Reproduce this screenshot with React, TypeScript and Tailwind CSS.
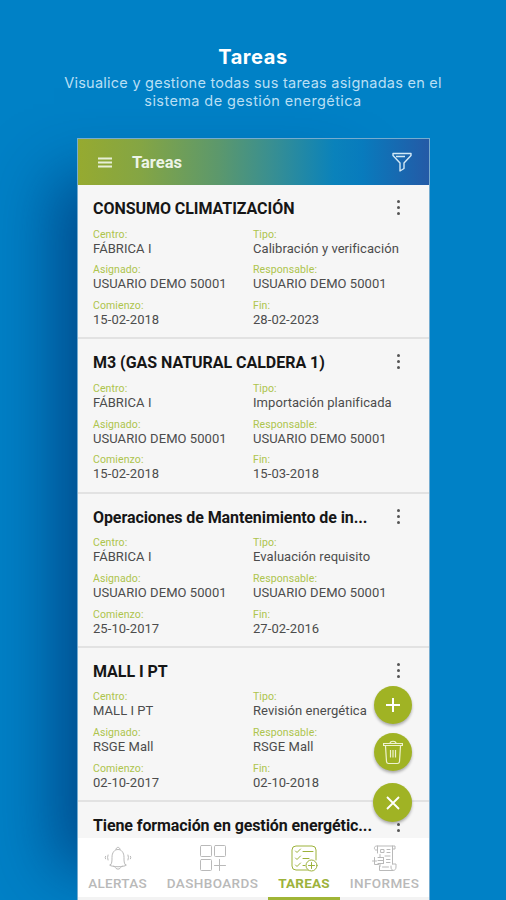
import React from 'react';
import clsx from 'clsx';

type Task = {
  title: string;
  titleClass: string;
  center?: string;
  type?: string;
  assigned?: string;
  responsible?: string;
  start?: string;
  end?: string;
};

const tasks: Task[] = [
  {
    title: 'CONSUMO CLIMATIZACIÓN',
    titleClass: 'tracking-[-0.05px]',
    center: 'FÁBRICA I',
    type: 'Calibración y verificación',
    assigned: 'USUARIO DEMO 50001',
    responsible: 'USUARIO DEMO 50001',
    start: '15-02-2018',
    end: '28-02-2023'
  },
  {
    title: 'M3 (GAS NATURAL CALDERA 1)',
    titleClass: 'tracking-[-0.03px]',
    center: 'FÁBRICA I',
    type: 'Importación planificada',
    assigned: 'USUARIO DEMO 50001',
    responsible: 'USUARIO DEMO 50001',
    start: '15-02-2018',
    end: '15-03-2018'
  },
  {
    title: 'Operaciones de Mantenimiento de in...',
    titleClass: 'tracking-[-0.08px]',
    center: 'FÁBRICA I',
    type: 'Evaluación requisito',
    assigned: 'USUARIO DEMO 50001',
    responsible: 'USUARIO DEMO 50001',
    start: '25-10-2017',
    end: '27-02-2016'
  },
  {
    title: 'MALL I PT',
    titleClass: 'tracking-[-0.05px]',
    center: 'MALL I PT',
    type: 'Revisión energética',
    assigned: 'RSGE Mall',
    responsible: 'RSGE Mall',
    start: '02-10-2017',
    end: '02-10-2018'
  }
];

function Field({ label, value }: { label: string; value?: string }) {
  return (
    <div className="h-[35.8px] whitespace-nowrap">
      <div className="h-[13px] text-[10.5px] leading-[13px] tracking-[0.1px] text-[#adc44c]">
        {label}:
      </div>
      <div className="text-[13px] leading-[16px] tracking-[0.06px] text-[#4c4c4c]">
        {value}
      </div>
    </div>
  );
}

function MoreDots() {
  return (
    <div className="flex w-1 flex-col items-center gap-[3px] pt-[1px]">
      <span className="h-[3px] w-[3px] rounded-full bg-[#555]" />
      <span className="h-[3px] w-[3px] rounded-full bg-[#555]" />
      <span className="h-[3px] w-[3px] rounded-full bg-[#555]" />
    </div>
  );
}

function TaskCard({ task }: { task: Task }) {
  return (
    <article className="h-[154.3px] shrink-0 border-b-2 border-[#e2e2e2] pl-[15px] pr-[29px] pt-[14px]">
      <div className="flex h-[28.6px] justify-between">
        <h2
          className={clsx(
            'whitespace-nowrap text-[16px] font-bold leading-5 text-[#161616]',
            task.titleClass
          )}
        >
          {task.title}
        </h2>
        <MoreDots />
      </div>
      <div className="grid grid-cols-[160px_1fr]">
        <Field label="Centro" value={task.center} />
        <Field label="Tipo" value={task.type} />
        <Field label="Asignado" value={task.assigned} />
        <Field label="Responsable" value={task.responsible} />
        <Field label="Comienzo" value={task.start} />
        <Field label="Fin" value={task.end} />
      </div>
    </article>
  );
}

const iconProps = {
  width: 28,
  height: 28,
  viewBox: '0 0 28 28',
  fill: 'none',
  stroke: 'currentColor',
  strokeWidth: 1,
  strokeLinecap: 'round',
  strokeLinejoin: 'round'
} as const;

function BellIcon() {
  return (
    <svg {...iconProps}>
      <path d="M12 5.500c0-3 4-3 4 0M6.500 21c1.500-1.500 1.500-4 1.500-7.500C8 8.500 10.500 5.500 14 5.500s6 3 6 8c0 3.500 0 6 1.500 7.500" />
      <path d="M9.500 22.300c-3.500-.2-5-1.800-3-1.800M9.500 22.300c3 .6 6 .6 9 0M18.500 22.300c3.500-.2 5-1.800 3-1.800M11 22.800c.5 3.200 5.500 3.200 6 0" />
      <path d="M4 11q-1 2.500 0 5M1.500 12.300q-.7 1.200 0 2.500M24 11q1 2.500 0 5M26.500 12.300q.7 1.200 0 2.500" />
    </svg>
  );
}

function DashboardIcon() {
  return (
    <svg {...iconProps}>
      <rect x="1.500" y="1.500" width="11" height="11" rx="1" />
      <rect x="15.500" y="1.500" width="11" height="11" rx="1" />
      <rect x="1.500" y="15.500" width="11" height="11" rx="1" />
      <path d="M20.500 15.500v11M15.500 21.500h11" />
    </svg>
  );
}

function TasksIcon() {
  return (
    <svg {...iconProps}>
      <path d="M19 26H6a4 4 0 0 1-4-4V6a4 4 0 0 1 4-4h16a4 4 0 0 1 4 4v10" />
      <path d="M5.500 7l1.500 1.500L10.500 5M5.500 14l1.500 1.500 3.500-3.500M5.500 21l1.500 1.500 3.500-3.500M13 7.500h10M13 14.500h6M13 21.500h2" />
      <circle cx="21.500" cy="21.500" r="5.500" fill="white" />
      <path d="M21.500 18.500v6M18.500 21.500h6" />
    </svg>
  );
}

function ReportsIcon() {
  return (
    <svg {...iconProps}>
      <path d="M6.500 9V6h-2c-2-1.500-1-4 1-4H24v3h-2M6.500 2v4M21.500 2v18M21.500 20H25v3c0 4.500-5 4.500-5 0v-1M22 26.500H8.500V22" />
      <path d="M10 5.500h3v3h-3zM16 5.500h3M16 8.500h3M14 12h5M15.500 15.500H19M15.500 18.500H19M11.500 23h6" />
      <path d="M9 10.500v3M7 13.500h5.500M7 16.500h5.500M7 19.500h5.500M3.500 13.500v7h4M9 20v2.500M1.500 17h4M12.500 13.500v6" />
    </svg>
  );
}

const navItems = [
  {
    label: 'ALERTAS',
    icon: <BellIcon />,
    width: 'w-[79px]',
    textClass: 'tracking-[0.3px]'
  },
  {
    label: 'DASHBOARDS',
    icon: <DashboardIcon />,
    width: 'w-[111px]',
    textClass: 'tracking-[0.4px]'
  },
  {
    label: 'TAREAS',
    icon: <TasksIcon />,
    width: 'w-[72px]',
    textClass: 'tracking-[0.2px]',
    active: true
  },
  {
    label: 'INFORMES',
    icon: <ReportsIcon />,
    width: 'w-[89px]',
    textClass: 'tracking-[0.4px]'
  }
];

function FloatingActions() {
  return (
    <div className="absolute left-[295px] top-[547px] flex w-[39px] flex-col items-center text-white">
      <button
        aria-label="Add"
        className="flex h-[38px] w-[38px] items-center justify-center rounded-full bg-[#a0b324] shadow-[0_2px_3px_rgba(0,0,0,0.3)]"
      >
        <svg width="14" height="14" viewBox="0 0 14 14" stroke="currentColor" strokeWidth="2">
          <path d="M7 0v14M0 7h14" />
        </svg>
      </button>
      <button
        aria-label="Delete"
        className="mt-[9px] flex h-[38px] w-[38px] items-center justify-center rounded-full bg-[#a0b324] shadow-[0_2px_3px_rgba(0,0,0,0.3)]"
      >
        <svg width="20" height="25" viewBox="0 0 20 25" fill="none" stroke="#eef2d0" strokeWidth="1.200">
          <path d="M2.500 6l1 15.500q.2 2 2 2h9q1.800 0 2-2L17.500 6M.6 5.500V3.500h18.800v2zM7 3.500c0-3 6-3 6 0M7.500 10v7.500M10 10v7.500M12.500 10v7.500" />
        </svg>
      </button>
      <button
        aria-label="Close"
        className="mt-[12px] flex h-[39px] w-[39px] items-center justify-center rounded-full bg-[#a0b324] shadow-[0_2px_3px_rgba(0,0,0,0.3)]"
      >
        <svg width="14" height="14" viewBox="0 0 14 14" stroke="currentColor" strokeWidth="1.800">
          <path d="M1 1l12 12M13 1L1 13" />
        </svg>
      </button>
    </div>
  );
}

function App() {
  return (
    <main className="flex h-[900px] w-[506px] flex-col overflow-hidden bg-[#0081c6] font-[Roboto,sans-serif]">
      <header className="h-[138px] shrink-0 pt-[44px] text-center font-[Inter,sans-serif] text-white">
        <h1 className="text-[20px] font-bold leading-[26px] tracking-[0.6px]">
          Tareas
        </h1>
        <p className="mt-[4px] whitespace-nowrap text-[14.5px] leading-[17.5px] tracking-[0.25px] text-[#b9dff4]">
          Visualice y gestione todas sus tareas asignadas en el
          <br />
          <span className="tracking-[0.4px]">sistema de gestión energética</span>
        </p>
      </header>

      <section className="relative ml-[77px] flex h-[762px] w-[353px] flex-col border-x border-t border-[#75acd0] bg-[#f6f6f6] shadow-[-58px_4px_60px_-35px_rgba(0,42,105,0.62)]">
        <div className="flex h-[46px] shrink-0 items-center bg-[linear-gradient(90deg,#96aa30_0%,#84a544_18%,#5c986c_40%,#398f91_55%,#0a82bb_73%,#087bbd_81%,#245aa6_100%)] pl-[20px] pr-[17px]">
          <svg width="14" height="11" viewBox="0 0 14 11" className="text-[#e7efd7]">
            <path d="M0 1.500h14M0 5.500h14M0 9.500h14" stroke="currentColor" strokeWidth="2" />
          </svg>
          <span className="ml-[20px] pt-[2px] text-[16.5px] font-bold leading-6 text-[#edf4e7]">
            Tareas
          </span>
          <svg
            width="20"
            height="20"
            viewBox="0 0 20 20"
            fill="none"
            stroke="currentColor"
            strokeWidth="1.400"
            strokeLinejoin="round"
            className="ml-auto text-[#d3e9f6]"
          >
            <path d="M1 1.500h18v2l-7 7.500v5.500L8 19v-8L1 3.500zM4 4.500h9" />
          </svg>
        </div>

        <div className="flex h-[653px] shrink-0 flex-col overflow-hidden">
          {tasks.map(task => (
            <TaskCard key={task.title} task={task} />
          ))}
          <div className="flex shrink-0 justify-between pl-[15px] pr-[29px] pt-[14px]">
            <h2 className="whitespace-nowrap text-[16px] font-bold leading-5 tracking-[-0.1px] text-[#161616]">
              Tiene formación en gestión energétic...
            </h2>
            <MoreDots />
          </div>
        </div>

        <nav className="flex h-[62px] bg-white">
          {navItems.map(item => (
            <div
              key={item.label}
              className={clsx(
                'flex h-full flex-col items-center border-b-[3px] pt-[6px]',
                item.width,
                item.active
                  ? 'border-[#a0b536] text-[#9db23b]'
                  : 'border-[#f3f3f3] text-[#b9b9b9]'
              )}
            >
              {item.icon}
              <span
                className={clsx(
                  'mt-[2px] whitespace-nowrap text-[13.5px] leading-[18px]',
                  item.textClass,
                  item.active ? 'font-bold' : 'font-medium'
                )}
              >
                {item.label}
              </span>
            </div>
          ))}
        </nav>

        <FloatingActions />
      </section>
    </main>
  );
}

export default App;
